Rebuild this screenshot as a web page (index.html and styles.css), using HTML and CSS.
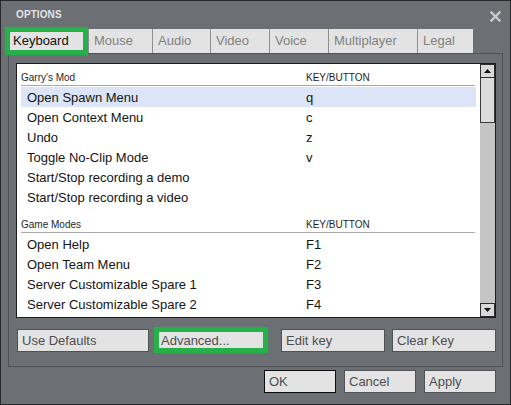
FILE: index.html
```html
<!DOCTYPE html>
<html>
<head>
<meta charset="utf-8">
<link rel="stylesheet" href="styles.css">
</head>
<body>
<div class="window">
  <div class="titlebar">
    <span class="title">OPTIONS</span>
    <svg class="close" width="11" height="11" viewBox="0 0 11 11"><path d="M1.5 1.5 L9.5 9.5 M9.5 1.5 L1.5 9.5" stroke="#c9cacc" stroke-width="2.4" stroke-linecap="square"/></svg>
  </div>
  <div class="tabs">
    <div class="tab active">Keyboard</div>
    <div class="tab">Mouse</div>
    <div class="tab">Audio</div>
    <div class="tab">Video</div>
    <div class="tab">Voice</div>
    <div class="tab">Multiplayer</div>
    <div class="tab">Legal</div>
  </div>
  <div class="panel">
    <div class="list">
      <div class="list-content">
        <div class="section">
          <div class="sec-head"><span>Garry's Mod</span><span>KEY/BUTTON</span></div>
          <div class="row selected"><span>Open Spawn Menu</span><span>q</span></div>
          <div class="row"><span>Open Context Menu</span><span>c</span></div>
          <div class="row"><span>Undo</span><span>z</span></div>
          <div class="row"><span>Toggle No-Clip Mode</span><span>v</span></div>
          <div class="row"><span>Start/Stop recording a demo</span><span></span></div>
          <div class="row"><span>Start/Stop recording a video</span><span></span></div>
        </div>
        <div class="section">
          <div class="sec-head"><span>Game Modes</span><span>KEY/BUTTON</span></div>
          <div class="row"><span>Open Help</span><span>F1</span></div>
          <div class="row"><span>Open Team Menu</span><span>F2</span></div>
          <div class="row"><span>Server Customizable Spare 1</span><span>F3</span></div>
          <div class="row"><span>Server Customizable Spare 2</span><span>F4</span></div>
        </div>
      </div>
      <div class="scrollbar">
        <div class="sb-btn"><svg width="7" height="4" viewBox="0 0 7 4"><path d="M0 4 L3.5 0 L7 4 Z" fill="#111"/></svg></div>
        <div class="sb-track"><div class="sb-thumb"></div></div>
        <div class="sb-btn"><svg width="7" height="4" viewBox="0 0 7 4"><path d="M0 0 L3.5 4 L7 0 Z" fill="#111"/></svg></div>
      </div>
    </div>
    <div class="btn-row">
      <div class="btn w-defaults">Use Defaults</div>
      <div class="btn w-advanced highlighted">Advanced...</div>
      <div class="btn w-key">Edit key</div>
      <div class="btn w-key">Clear Key</div>
    </div>
  </div>
  <div class="footer">
    <div class="btn w-foot default">OK</div>
    <div class="btn w-foot">Cancel</div>
    <div class="btn w-foot">Apply</div>
  </div>
</div>
</body>
</html>
```
FILE: styles.css
```css
* { box-sizing: border-box; }
html, body { margin: 0; padding: 0; }
body { width: 511px; height: 405px; overflow: hidden; background: #6c6f73; font-family: "Liberation Sans", Arial, sans-serif; }

.window {
  width: 511px; height: 405px;
  background: #6c6f73;
  border: 1px solid #26282a;
  display: flex; flex-direction: column;
}

.titlebar {
  height: 28px;
  display: flex; align-items: center; justify-content: space-between;
  padding: 0 9px 0 15px;
}
.title { font-weight: bold; font-size: 10px; color: #e2e3e4; letter-spacing: 0.1px; margin-top: -1px; }
.close { display: block; margin-top: 2px; }

.tabs {
  height: 24px;
  margin-left: 7px;
  display: grid;
  grid-template-columns: 80px 64px 58px 59px 59px 89px 56px;
}
.tab {
  position: relative;
  background: #e3e3e3;
  border-left: 1px solid #8d8f91;
  color: #818181;
  font-size: 13px;
  padding-left: 5px;
  line-height: 24px;
}
.tab:first-child { border-left: none; }
.tab.active { color: #111; padding-left: 5px; }
.tab.active::after, .btn.highlighted::after {
  content: "";
  position: absolute;
  border: 5px solid #25b04a;
  box-shadow: 0 0 1px #25b04a;
}
.tab.active::after { top: -2px; left: -3px; right: 0; bottom: -2px; }

.panel {
  height: 314px;
  margin: 0 7px;
  border: 1px solid #4f5256;
  padding: 9px 7px 14px 7px;
  display: flex; flex-direction: column;
}

.list {
  height: 255px;
  width: 480px;
  background: #fff;
  border: 1px solid #1d1d1d;
  display: flex;
}
.list-content { flex: 1; overflow: hidden; }

.section + .section { margin-top: 4px; }
.sec-head {
  height: 22px;
  margin: 0 5px 1px 4px;
  border-bottom: 1px solid #a9a9a9;
  display: grid;
  grid-template-columns: 285px 1fr;
  font-size: 10px;
  color: #1f1f1f;
  padding-top: 8px;
}
.row {
  height: 20px;
  margin: 0 4px;
  padding: 1px 0 0 6px;
  display: grid;
  grid-template-columns: 279px 1fr;
  font-size: 13px;
  line-height: 19px;
  color: #141414;
}
.row.selected { background: #dbe5f7; }

.scrollbar {
  width: 15px;
  display: flex; flex-direction: column;
  background: #c5c5c5;
}
.sb-btn {
  height: 14px;
  background: #d9d9d9;
  border: 1px solid #2d2d2d;
  display: flex; align-items: center; justify-content: center;
}
.sb-btn svg { display: block; }
.sb-track { flex: 1; }
.sb-thumb {
  height: 45px;
  background: #dcdcdc;
  border: 1px solid #3a3a3a;
  border-top: none;
}

.btn-row {
  margin: 11px 0 0 1px;
  display: flex;
  gap: 7px;
}
.btn-row .btn { flex-shrink: 0; }
.btn {
  position: relative;
  height: 23px;
  background: #e3e3e3;
  border: 1px solid #505255;
  color: #4e4e4e;
  font-size: 13px;
  line-height: 22px;
  padding-left: 4px;
}
.w-defaults { width: 132px; }
.w-advanced { width: 111px; margin-right: 7px; }
.w-key { width: 104px; }
.btn.highlighted::after { top: -3px; left: -3px; right: -2px; bottom: -2px; }

.footer {
  margin-top: 3px;
  display: flex;
  justify-content: flex-end;
  gap: 8px;
  padding-right: 14px;
}
.w-foot { width: 72px; }
.btn.default { border-color: #0d0d0d; }
```
